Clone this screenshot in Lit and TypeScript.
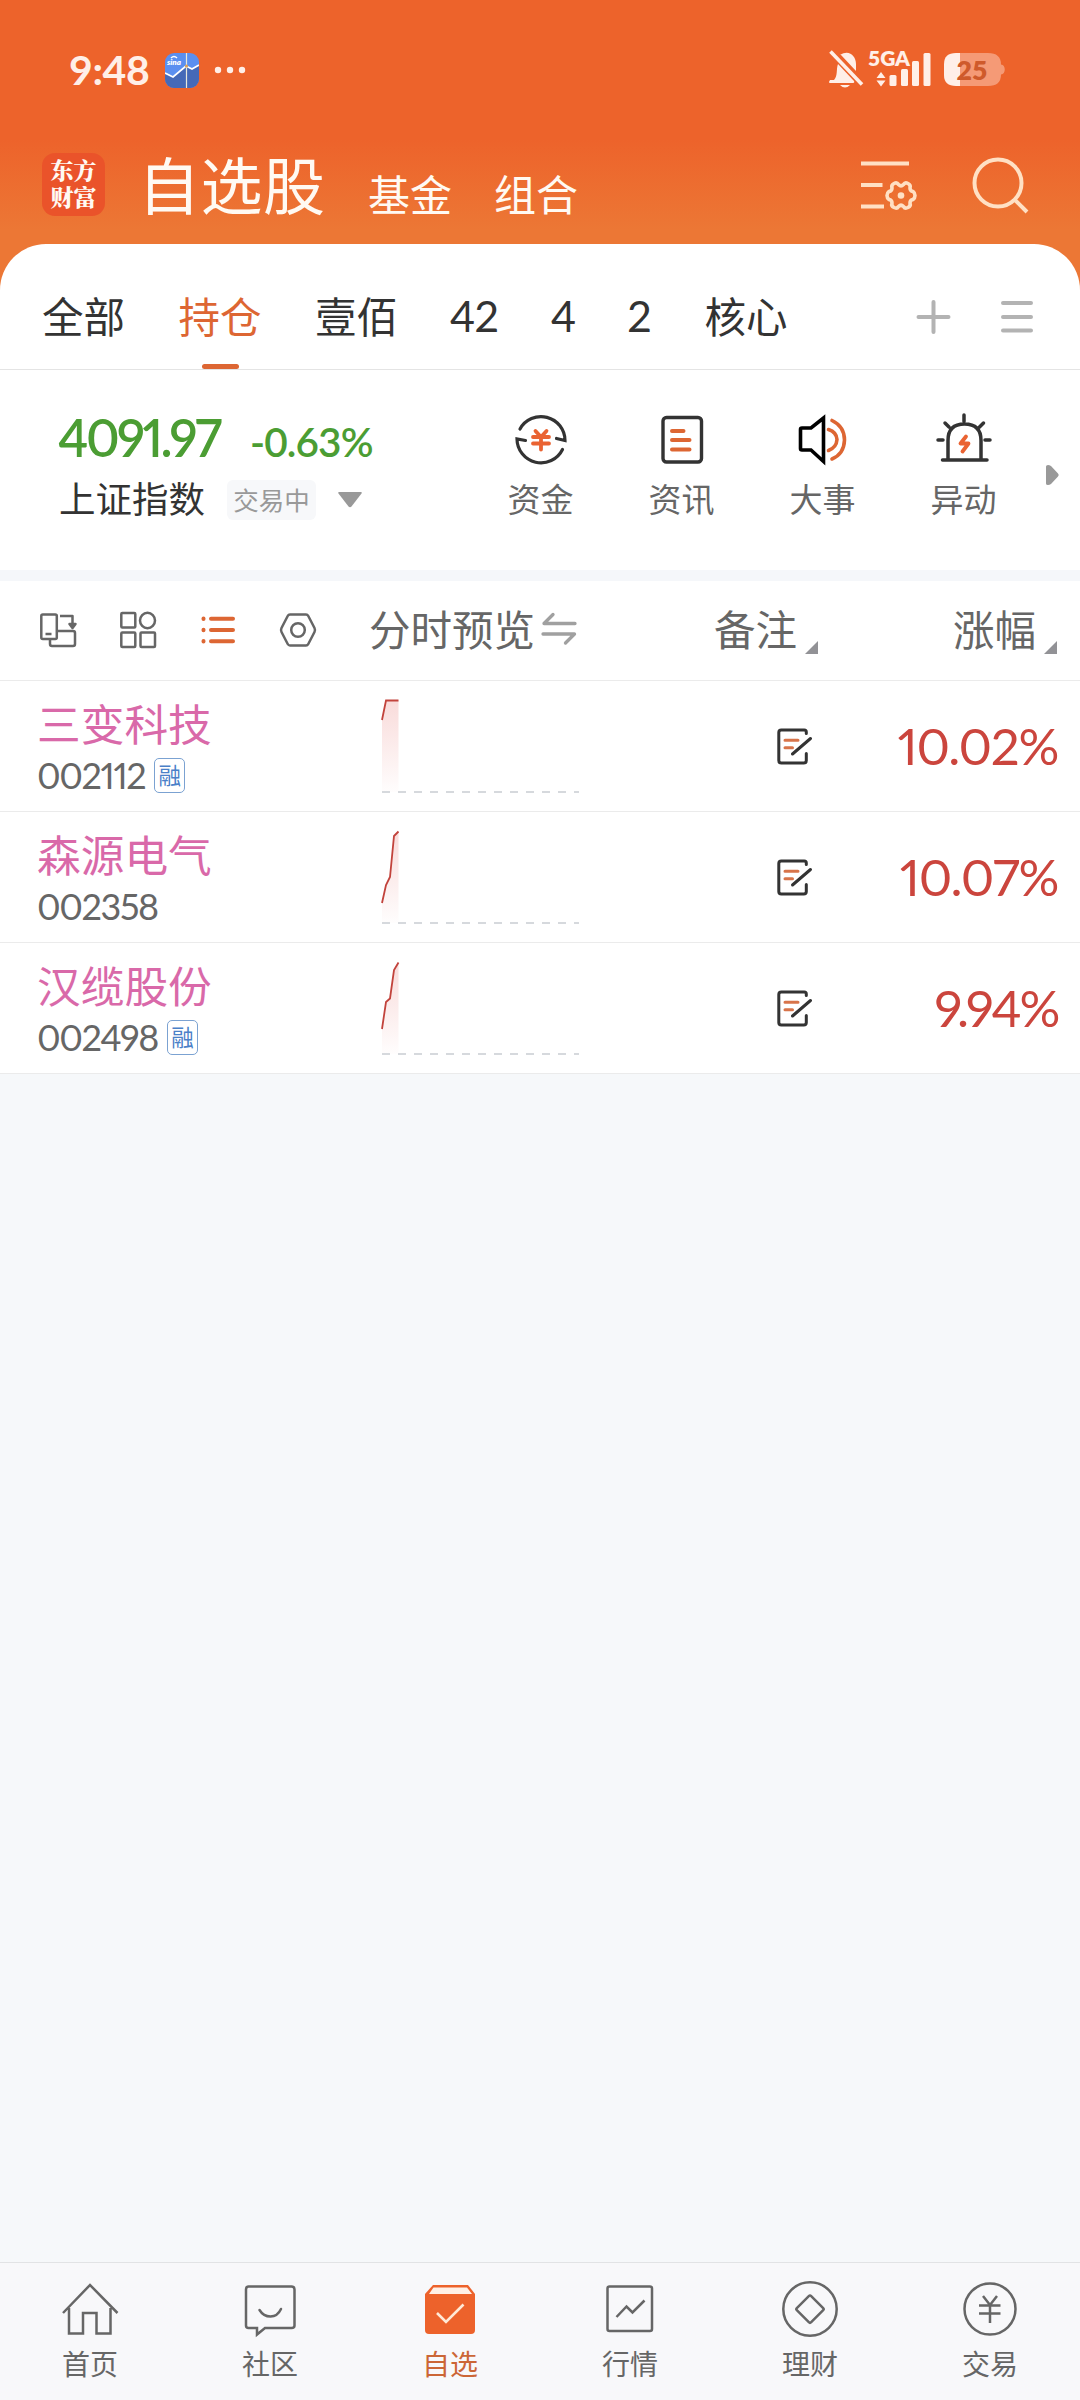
import { LitElement, html, css, svg, nothing } from "lit";
import { customElement, property } from "lit/decorators.js";

const shared = css`
  :host { display: block; box-sizing: border-box; }
  * { box-sizing: border-box; }
  svg { display: block; flex: none; overflow: visible; }
  .num { font-family: "Lato", "Noto Sans CJK SC", sans-serif; }
`;

/* Icons are drawn in page coordinates; each viewBox is the slot the icon fills. */
const INK = "#333";
const GREY = "#666";
const ORANGE = "#dd6633";

@customElement("status-bar")
class StatusBar extends LitElement {
  static styles = [shared, css`
    .bar { display: flex; align-items: center; height: 140px; padding: 0 74px 0 69px; color: #ffefe8; }
    .time { font-size: 41px; font-weight: 700; line-height: 40px; width: 96px; letter-spacing: -0.4px; white-space: nowrap; }
    .app { margin-right: 15px; }
    .space { flex: 1; }
    text { font-family: "Lato", sans-serif; font-weight: 800; }
  `];
  render() {
    return html`
      <div class="bar">
        <div class="time num">9:48</div>
        <svg class="app" width="34" height="35" viewBox="165 53 34 35">
          <defs><clipPath id="c"><rect x="165" y="53" width="34" height="35" rx="9"/></clipPath></defs>
          <g clip-path="url(#c)">
            <rect x="165" y="53" width="34" height="35" fill="#5b8ff0"/>
            <path d="M165 73l8 4 13-11 6 3 7-4v24h-34z" fill="#4569b8"/>
            <path d="M165 73l8 4 13-11 6 3 7-4" fill="none" stroke="#fff" stroke-width="1.8"/>
            <path d="M186.500 53v35" stroke="#e8e8dc" stroke-width="1.2"/>
            <circle cx="186.500" cy="66" r="1.600" fill="#d8a05a"/>
            <path d="M171 58q3-3 6 0" fill="none" stroke="#fff" stroke-width="1.500"/>
          </g>
          <text x="167" y="65" font-size="8" font-style="italic" fill="#fff">sina</text>
        </svg>
        <svg width="32" height="8" viewBox="214 66 32 8" fill="currentColor">
          <circle cx="218" cy="70" r="3.200"/><circle cx="230" cy="70" r="3.200"/><circle cx="242" cy="70" r="3.200"/>
        </svg>
        <div class="space"></div>
        <svg width="178" height="40" viewBox="828 50 178 40" fill="currentColor">
          <path d="M834 80c4-4 2-11 4-16l16 17c1 2-1 2-2 2h-21c-3 0-2-1-1-3zM840 55c9-6 16 1 16 9v7l-15-16z"/>
          <path d="M840 85h10q-5 5-10 0z"/>
          <path d="M830.500 51.500l31.500 33" stroke="currentColor" stroke-width="3.600"/>
          <text x="868" y="65.500" font-size="20.500" textLength="42" lengthAdjust="spacingAndGlyphs">5GA</text>
          <path d="M876.500 78l4.500-6 4.500 6zM876.500 80.500l4.500 6 4.500-6z"/>
          <rect x="889.500" y="75" width="7" height="11" rx="1.500"/>
          <rect x="901" y="69" width="7" height="17" rx="1.500"/>
          <rect x="912" y="61" width="7" height="25" rx="1.500"/>
          <rect x="923.500" y="53" width="7" height="33" rx="1.500"/>
          <path d="M960 53h28q13 0 13 11.500c5 0 5 10 0 10q0 11.500-13 11.500h-28z" fill="#f59a76"/>
          <path d="M960 53v33h-4q-12 0-12-11v-11q0-11 12-11z"/>
          <text x="956.500" y="79.500" font-size="27" fill="#cf5a2b" textLength="31" lengthAdjust="spacingAndGlyphs">25</text>
        </svg>
      </div>`;
  }
}

@customElement("app-header")
class AppHeader extends LitElement {
  static styles = [shared, css`
    .head { display: flex; height: 104px; padding: 0 50px 0 42px; align-items: flex-start; color: #fffaf3; }
    .logo { width: 63px; height: 63px; margin-top: 13px; border-radius: 13px; background: #ea532a; padding-top: 4px;
      font-family: "Noto Serif CJK SC", "Noto Sans CJK SC", sans-serif; font-size: 23px; line-height: 26.500px; font-weight: 800; text-align: center; }
    .title { font-size: 62px; line-height: 80px; margin: 3px 0 0 33px; width: 230px; letter-spacing: 0.5px; white-space: nowrap; }
    .link { font-size: 42px; line-height: 60px; margin-top: 23px; width: 126px; white-space: nowrap; }
    .space { flex: 1; }
    .set { margin: 21px 54px 0 0; }
    .find { margin-top: 16px; }
  `];
  render() {
    return html`
      <div class="head">
        <div class="logo">东方<br>财富</div>
        <div class="title">自选股</div>
        <div class="link">基金</div>
        <div class="link">组合</div>
        <div class="space"></div>
        <svg class="set" width="58" height="56" viewBox="860 161 58 56" fill="none" stroke="#ffe0c4" stroke-width="4">
          <path d="M861 163.500h48M861 185h21.500M861 206.500h23"/>
          <path stroke-width="3.600" stroke-linejoin="round" d="M894 183.500Q897 182 898.500 184.500Q901 187 903.500 184.500Q905 182 908 183.500Q911 185 910 188Q910 191 913 191.500Q915 193 915 195.500Q915 198 913 199.500Q910 200 910 203Q911 206 908 207.500Q905 209 903.500 206.500Q901 204 898.500 206.500Q897 209 894 207.500Q891 206 892 203Q892 200 889 199.500Q887 198 887 195.500Q887 193 889 191.500Q892 191 892 188Q891 185 894 183.500z"/>
          <circle cx="901" cy="195.500" r="3.300" fill="#ffe0c4" stroke="none"/>
        </svg>
        <svg class="find" width="58" height="58" viewBox="972 155 58 58" fill="none" stroke="#ffe0c4" stroke-width="4">
          <circle cx="998" cy="182" r="23.500"/><path d="M1014 198l13 13"/>
        </svg>
      </div>`;
  }
}

@customElement("group-tabs")
class GroupTabs extends LitElement {
  static styles = [shared, css`
    .tabs { display: flex; height: 126px; border-bottom: 1px solid #e4e4e4; padding: 0 46px 0 42px; color: #333; }
    .tab { position: relative; font-size: 41.500px; line-height: 60px; padding-top: 41px; white-space: nowrap; }
    .tab.num { font-size: 43px; letter-spacing: -0.8px; left: -1.5px; padding-top: 42px; }
    .on { color: #dd6633; width: 84px; height: 125px; }
    .on::after { content: ""; position: absolute; left: 50%; bottom: 0; width: 37px; height: 5px; margin-left: -19px; border-radius: 3px; background: #dd6633; }
    .w2 { width: 136.500px; } .w42 { width: 101px; } .w4 { width: 76px; } .w1 { width: 76px; }
    .space { flex: 1; }
    .plus { margin: 55px 50px 0 0; }
    .menu { margin-top: 57px; }
  `];
  render() {
    return html`
      <div class="tabs">
        <div class="w2"><div class="tab">全部</div></div>
        <div class="w2"><div class="tab on">持仓</div></div>
        <div class="w2"><div class="tab">壹佰</div></div>
        <div class="tab num w42">42</div>
        <div class="tab num w4">4</div>
        <div class="tab num w1">2</div>
        <div class="tab">核心</div>
        <div class="space"></div>
        <svg class="plus" width="35" height="36" viewBox="915.500 299 35 36" stroke="#b3b3b3" stroke-width="4" stroke-linecap="round">
          <path d="M918 317h30M933 302v30"/>
        </svg>
        <svg class="menu" width="33" height="33" viewBox="1001.500 301 33 33" stroke="#b3b3b3" stroke-width="4" stroke-linecap="round">
          <path d="M1003.500 303h28M1003.500 317h28M1003.500 330.500h28"/>
        </svg>
      </div>`;
  }
}

const SHORTCUTS = [
  { label: "资金", icon: svg`
    <g fill="none" stroke="#333" stroke-width="3.200" stroke-linecap="round">
      <path d="M519.500 429.500A24 24 0 0 1 564.500 441l-8.500-2M562 450A24 24 0 0 1 516.500 439.500l8.500 1.500"/></g>
    <g fill="none" stroke="#ea6332" stroke-width="3.800" stroke-linecap="round">
      <path d="M535 431.500l5.500 6 5.500-6M532.500 437.500h16M532.500 444h16M540.500 438v12"/></g>` },
  { label: "资讯", icon: svg`
    <rect x="521.500" y="418" width="38.500" height="44.500" rx="3.500" fill="none" stroke="#333" stroke-width="3.400"/>
    <path d="M530.500 431.500h11.500M530.500 440.500h17.500M530.500 450h17.500" stroke="#dd6633" stroke-width="4" stroke-linecap="round"/>` },
  { label: "大事", icon: svg`
    <path d="M518 430q0-1.500 1.500-1.500h9l12.500-10v43.500l-12.500-11.500h-9q-1.500 0-1.500-1.500z" fill="none" stroke="#000" stroke-width="3.600"/>
    <path d="M546 430q8 2.500 8.500 10q-.5 8-8.500 11M549.500 421q12.500 6 12.500 19.500q-.5 14-12.500 19" fill="none" stroke="#dd6633" stroke-width="3.600" stroke-linecap="round"/>` },
  { label: "异动", icon: svg`
    <path d="M524.500 460v-19q0-16.500 16.500-16.500t16.500 16.500v19M519 460.500h44.500M540.500 415.500v6.500M514.500 440.500h5M561.500 440.500h5M521.500 423.500l4 4M560 423.500l-4 4" fill="none" stroke="#333" stroke-width="3.500" stroke-linecap="round"/>
    <path d="M542.500 437l-5.500 7h8l-6 8" fill="none" stroke="#ea6332" stroke-width="3.800" stroke-linecap="round" stroke-linejoin="round"/>` },
];

@customElement("index-panel")
class IndexPanel extends LitElement {
  static styles = [shared, css`
    .panel { display: flex; height: 200px; }
    .quote { width: 470px; padding: 38px 0 0 58px; color: #4b9d33; }
    .line1 { display: flex; align-items: baseline; height: 56px; line-height: 60px; }
    .price { font-size: 51px; font-weight: 600; width: 192px; letter-spacing: -2.600px; font-feature-settings: "pnum"; white-space: nowrap; }
    .chg { font-size: 40.500px; font-weight: 600; letter-spacing: -0.900px; white-space: nowrap; }
    .line2 { display: flex; align-items: center; height: 60px; margin-top: 6px; color: #333; }
    .name { font-size: 36.500px; width: 168px; line-height: 50px; margin-left: 1px; margin-top: -5px; white-space: nowrap; }
    .state { width: 89px; height: 40px; border-radius: 6px; background: #f7f8fa; color: #999; font-size: 25.500px; line-height: 37px; text-align: center; }
    .drop { margin-left: 22px; }
    .short { width: 141px; padding-top: 41px; display: flex; flex-direction: column; align-items: center; color: #666; font-size: 33px; line-height: 46px; }
    .short svg { margin-bottom: 8px; }
    .more { margin: 95px 0 0 12px; }
  `];
  render() {
    return html`
      <div class="panel">
        <div class="quote">
          <div class="line1"><div class="price num">4091.97</div><div class="chg num">-0.63%</div></div>
          <div class="line2">
            <div class="name">上证指数</div><div class="state">交易中</div>
            <svg class="drop" width="24" height="16" viewBox="0 0 24 16" fill="#999"><path d="M1 0h22q1.500 0 .5 1.500l-10 13q-1.500 1.500-3 0l-10-13q-1-1.500.5-1.500z"/></svg>
          </div>
        </div>
        ${SHORTCUTS.map(s => html`
          <div class="short"><svg width="56" height="56" viewBox="512.500 411.500 56 56">${s.icon}</svg><div>${s.label}</div></div>`)}
        <svg class="more" width="13" height="20" viewBox="0 0 13 20" fill="#999"><path d="M0 1.500q0-1.500 2-1.500 1.500 0 3 1l7 7.500q1.500 1.500 0 3l-7 7.500q-1.500 1-3 1-2 0-2-1.500z"/></svg>
      </div>`;
  }
}

@customElement("list-toolbar")
class ListToolbar extends LitElement {
  static styles = [shared, css`
    .bar { display: flex; height: 100px; border-bottom: 1px solid #ebebeb; padding: 0 22px 0 38px; color: #666; font-size: 41.500px; line-height: 60px; }
    .icons { width: 331px; padding-top: 29px; }
    .col { display: flex; padding-top: 17px; white-space: nowrap; }
    .preview { width: 345px; }
    .note { width: 239px; }
    .swap { margin: 14px 0 0 6px; }
    .tri { margin: 43px 0 0 8px; }
  `];
  render() {
    const tri = html`<svg class="tri" width="13" height="13" viewBox="0 0 13 13" fill="#929296"><path d="M13 0v13h-13z"/></svg>`;
    return html`
      <div class="bar">
        <div class="icons">
          <svg width="280" height="40" viewBox="38 610 280 40" fill="none" stroke="${GREY}" stroke-width="2.500" stroke-linejoin="round">
            <rect x="41.300" y="614.500" width="15.500" height="24.500" rx="1.500"/>
            <path d="M45.500 634h6M60 616h12.500v8.500M57.500 631h15.500q2 0 2 2v11q0 2-2 2h-21q-2 0-2-2v-4.500"/>
            <path d="M69.500 624l3 4 3-4z" fill="${GREY}"/>
            <rect x="121.300" y="613" width="14" height="14.500" rx="1"/><rect x="121.300" y="632.500" width="14" height="14.500" rx="1"/>
            <rect x="140.500" y="632.500" width="14.500" height="14.500" rx="1"/><ellipse cx="147.500" cy="620.500" rx="7.500" ry="7.700"/>
            <g stroke="${ORANGE}" stroke-width="4" stroke-linecap="round">
              <path d="M211 618.700h22M211 630h22M211 641.200h22M203.500 618.500v.4M203.500 629.800v.4M203.500 641v.4"/></g>
            <path d="M290 614.500h16q1.500 0 2.300 1.500l6.200 12q1 2 0 4l-6.200 12q-.8 1.500-2.300 1.500h-16q-1.500 0-2.300-1.500l-6.200-12q-1-2 0-4l6.200-12q.8-1.500 2.300-1.500z"/>
            <circle cx="298" cy="630" r="6.800"/>
          </svg>
        </div>
        <div class="col preview">分时预览
          <svg class="swap" width="36" height="34" viewBox="541 612 36 34" fill="none" stroke="#a0a0a0" stroke-width="3.300" stroke-linecap="round" stroke-linejoin="round">
            <path d="M575 623.500h-31l9-9M543 634h31.500l-9 9"/></svg>
        </div>
        <div class="col note">备注${tri}</div>
        <div class="col">涨幅${tri}</div>
      </div>`;
  }
}

@customElement("stock-row")
class StockRow extends LitElement {
  @property() name = "";
  @property() code = "";
  @property() pct = "";
  @property({ type: Number }) track = 0;
  @property({ type: Boolean }) margin = false;
  @property({ type: Array }) pts: number[][] = [];
  static styles = [shared, css`
    .row { display: flex; height: 131px; border-bottom: 1px solid #ebebeb; padding: 0 22px 0 37px; }
    .who { width: 344px; padding-top: 9px; }
    .name { font-size: 43.700px; line-height: 64px; color: #d969a9; height: 65px; }
    .sub { display: flex; height: 40px; align-items: center; }
    .code { font-size: 36px; color: #666; line-height: 40px; font-feature-settings: "pnum"; letter-spacing: -1.400px; }
    .tag { margin-left: 9px; width: 31px; height: 35px; border: 1.500px solid #7ba2d2; border-radius: 5px; color: #4a80c8; font-size: 22.500px; line-height: 31px; text-align: center; display: flex; justify-content: center; }
    .chart { width: 395px; }
    .edit { padding-top: 46px; flex: 1; }
    .pct { font-size: 51px; line-height: 60px; padding-top: 35px; color: #cb453d; font-feature-settings: "pnum"; }
  `];
  render() {
    const d = this.pts.map(([x, y], i) => `${i ? "L" : "M"}${x} ${y}`).join("");
    return html`
      <div class="row">
        <div class="who">
          <div class="name">${this.name}</div>
          <div class="sub"><div class="code num">${this.code}</div>${this.margin ? html`<div class="tag">融</div>` : nothing}</div>
        </div>
        <div class="chart">
          <svg width="200" height="130" viewBox="0 1 200 130" fill="none">
            <defs><linearGradient id="g" gradientUnits="userSpaceOnUse" x1="0" y1="20" x2="0" y2="112">
              <stop offset="0" stop-color="#e04b46" stop-opacity=".2"/><stop offset="1" stop-color="#e04b46" stop-opacity=".01"/></linearGradient></defs>
            <path d="${d}V112H1z" fill="url(#g)"/>
            <path d="${d}" stroke="#c2433c" stroke-width="1.800"/>
            <path d="M1 112h197" stroke="#d6d9dd" stroke-width="2" stroke-dasharray="8 8"/>
          </svg>
        </div>
        <div class="edit">
          <svg width="38" height="40" viewBox="776 726.500 38 40" fill="none" stroke="${INK}" stroke-width="3" stroke-linecap="round">
            <path d="M806.300 733v-1.500q0-2-2-2h-23q-2.500 0-2.500 2.500v28q0 2.500 2.500 2.500h22.500q2.500 0 2.500-2.500v-7M792.500 753.500l18-15.500"/>
            <path d="M785 739.700h13M785 747.300h7.500" stroke="#d8744a"/>
          </svg>
        </div>
        <div class="pct num" style="letter-spacing:${this.track}px">${this.pct}</div>
      </div>`;
  }
}

const STOCKS = [
  { name: "三变科技", code: "002112", pct: "10.02%", track: -1.3, margin: true, pts: [[1, 40], [5, 20.5], [17.5, 20.5]] },
  { name: "森源电气", code: "002358", pct: "10.07%", track: -1.3, margin: false, pts: [[1, 92], [5, 74], [9, 66], [13, 25], [17.500, 20.500]] },
  { name: "汉缆股份", code: "002498", pct: "9.94%", track: -2.3, margin: true, pts: [[1, 87], [5, 60], [9, 56.500], [13, 28], [17.500, 20.500]] },
];

const NAV = [
  { label: "首页", icon: svg`<path d="M63 2313l27-28 27.500 28M69 2308v25.500h14v-20.500h13.500v20.500h14v-25.500"/>` },
  { label: "社区", icon: svg`<path d="M68.500 2286.500h43q3 0 3 3v36q0 2.500-3 2.500h-26.500l-8 6.500v-6.500h-8.500q-2.500 0-2.500-2.500v-36q0-3 2.500-3z" /><path d="M79.500 2310q4 6.500 11 6.500t10.500-7.500" stroke-linecap="round"/>` },
  { label: "自选", on: true, icon: svg`<path d="M73 2285h35l7 9v36q0 4-4 4h-42q-4 0-4-4v-36z" fill="#ed622b" stroke="none"/><path d="M73.500 2287.500h33.500l5 6.500h-43z" fill="#fff0e6" stroke="none"/><path d="M77 2313l9 9 17.500-17.500" stroke="#ffe9d6" stroke-width="2.600"/>` },
  { label: "行情", icon: svg`<rect x="67.500" y="2286.500" width="44.500" height="44.500" rx="2"/><path d="M76.500 2317l10-10.500 6 6 12-12"/>` },
  { label: "理财", icon: svg`<circle cx="90" cy="2309" r="26.700"/><path d="M88.800 2296.200q1.200-1.200 2.400 0l12 12q1 1 0 2l-12 12q-1.200 1.200-2.400 0l-12-12q-1-1 0-2z"/>` },
  { label: "交易", icon: svg`<circle cx="90" cy="2309" r="25.500"/><path d="M83 2296l7 9 7-9M79 2305.500h21.500M79 2313.500h21.500M90 2305v18"/>` },
];

@customElement("bottom-nav")
class BottomNav extends LitElement {
  static styles = [shared, css`
    .nav { display: grid; grid-template-columns: repeat(6, 1fr); height: 138px; border-top: 1px solid #e2e3e5; background: #f8f8fa; }
    .item { display: flex; flex-direction: column; align-items: center; padding-top: 16px; color: #666; font-size: 28px; line-height: 40px; }
    .item svg { margin-bottom: 4px; }
    .on { color: #cc6636; }
  `];
  render() {
    return html`<div class="nav">${NAV.map(n => html`
      <div class="item ${n.on ? "on" : ""}">
        <svg width="60" height="60" viewBox="60 2279 60 60" fill="none" stroke="${GREY}" stroke-width="2.500">${n.icon}</svg>
        <div>${n.label}</div>
      </div>`)}</div>`;
  }
}

@customElement("app-root")
class AppRoot extends LitElement {
  static styles = [shared, css`
    :host { display: flex; flex-direction: column; width: 1080px; height: 2400px; overflow: hidden; background: #f6f8fa;
      font-family: "Noto Sans CJK SC", sans-serif; font-weight: 400; }
    .top { background: linear-gradient(#ed632b 0, #ed632b 140px, #ec7735 230px, #ec7735 100%); height: 290px; margin-bottom: -46px; }
    .sheet { background: #fff; border-radius: 46px 46px 0 0; }
    .band { height: 11px; background: #f5f7fa; }
    .fill { flex: 1; }
  `];
  render() {
    return html`
      <div class="top"><status-bar></status-bar><app-header></app-header></div>
      <div class="sheet">
        <group-tabs></group-tabs>
        <index-panel></index-panel>
        <div class="band"></div>
        <list-toolbar></list-toolbar>
        ${STOCKS.map(s => html`<stock-row .name=${s.name} .code=${s.code} .pct=${s.pct} .track=${s.track} .margin=${s.margin} .pts=${s.pts}></stock-row>`)}
      </div>
      <div class="fill"></div>
      <bottom-nav></bottom-nav>`;
  }
}
